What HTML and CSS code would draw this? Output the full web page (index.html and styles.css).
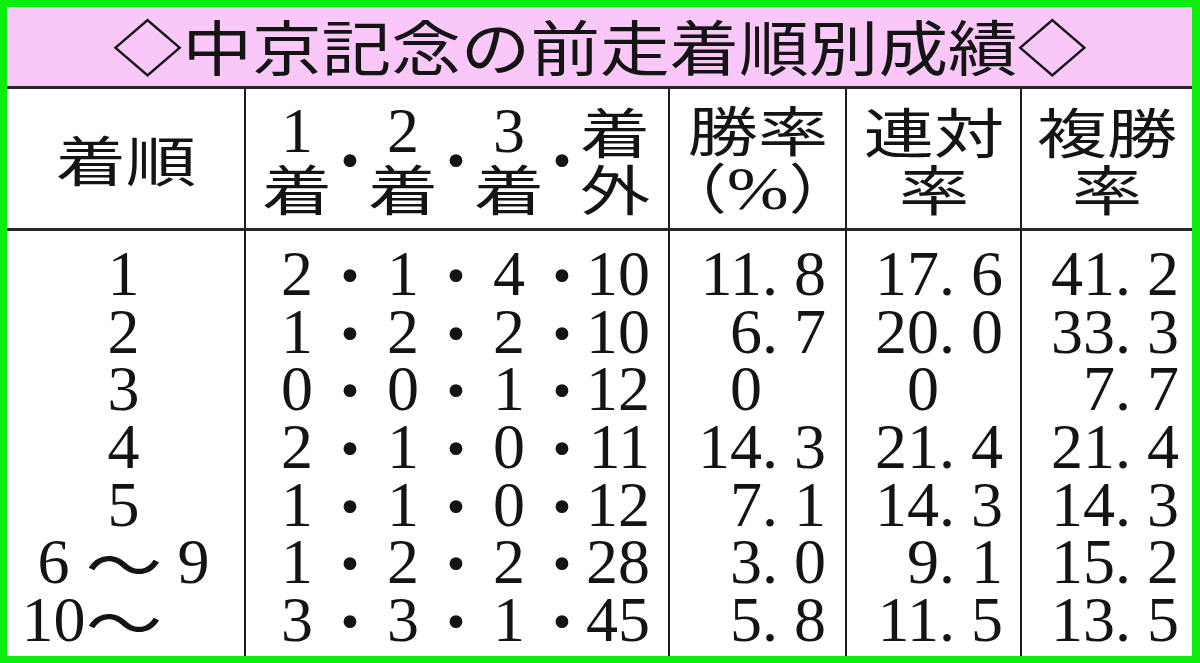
FILE: index.html
```html
<!DOCTYPE html>
<html lang="ja">
<head>
<meta charset="utf-8">
<title>中京記念の前走着順別成績</title>
<link rel="stylesheet" href="styles.css">
</head>
<body>
<div class="frame">
  <div class="title"><span class="title-text">◇中京記念の前走着順別成績◇</span></div>
  <div class="table">
    <div class="th c1"><span class="jp">着順</span></div>
    <div class="th c2">
      <div class="grp"><span class="num">1</span><span class="jp">着</span></div>
      <span class="dot">･</span>
      <div class="grp"><span class="num">2</span><span class="jp">着</span></div>
      <span class="dot">･</span>
      <div class="grp"><span class="num">3</span><span class="jp">着</span></div>
      <span class="dot">･</span>
      <div class="grp"><span class="jp">着</span><span class="jp">外</span></div>
    </div>
    <div class="th c3"><span class="jp">勝率</span><span class="paren">（<span class="pct">%</span>）</span></div>
    <div class="th c4"><span class="jp">連対</span><span class="jp">率</span></div>
    <div class="th c5"><span class="jp">複勝</span><span class="jp">率</span></div>

    <div class="td c1">
      <div class="rank">1</div>
      <div class="rank">2</div>
      <div class="rank">3</div>
      <div class="rank">4</div>
      <div class="rank">5</div>
      <div class="rank range"><span class="slot">6</span><span class="wave">〜</span><span class="slot">9</span></div>
      <div class="rank range"><span class="slot">10</span><span class="wave">〜</span><span class="slot"></span></div>
    </div>
    <div class="td c2">
      <div class="rec"><span>2</span><span class="dot">･</span><span>1</span><span class="dot">･</span><span>4</span><span class="dot">･</span><span class="last">10</span></div>
      <div class="rec"><span>1</span><span class="dot">･</span><span>2</span><span class="dot">･</span><span>2</span><span class="dot">･</span><span class="last">10</span></div>
      <div class="rec"><span>0</span><span class="dot">･</span><span>0</span><span class="dot">･</span><span>1</span><span class="dot">･</span><span class="last">12</span></div>
      <div class="rec"><span>2</span><span class="dot">･</span><span>1</span><span class="dot">･</span><span>0</span><span class="dot">･</span><span class="last">11</span></div>
      <div class="rec"><span>1</span><span class="dot">･</span><span>1</span><span class="dot">･</span><span>0</span><span class="dot">･</span><span class="last">12</span></div>
      <div class="rec"><span>1</span><span class="dot">･</span><span>2</span><span class="dot">･</span><span>2</span><span class="dot">･</span><span class="last">28</span></div>
      <div class="rec"><span>3</span><span class="dot">･</span><span>3</span><span class="dot">･</span><span>1</span><span class="dot">･</span><span class="last">45</span></div>
    </div>
    <div class="td c3 rate">
      <div>11. 8</div>
      <div>6. 7</div>
      <div class="int">0</div>
      <div>14. 3</div>
      <div>7. 1</div>
      <div>3. 0</div>
      <div>5. 8</div>
    </div>
    <div class="td c4 rate">
      <div>17. 6</div>
      <div>20. 0</div>
      <div class="int">0</div>
      <div>21. 4</div>
      <div>14. 3</div>
      <div>9. 1</div>
      <div>11. 5</div>
    </div>
    <div class="td c5 rate">
      <div>41. 2</div>
      <div>33. 3</div>
      <div>7. 7</div>
      <div>21. 4</div>
      <div>14. 3</div>
      <div>15. 2</div>
      <div>13. 5</div>
    </div>
  </div>
</div>
</body>
</html>
```

FILE: styles.css
```css
html, body {
  margin: 0;
  padding: 0;
  background: #ffffff;
}

.frame {
  box-sizing: border-box;
  width: 1200px;
  height: 663px;
  border-style: solid;
  border-color: #0cee0c;
  border-width: 7px 8px 7px 7px;
  display: flex;
  flex-direction: column;
  background: #ffffff;
  color: #141414;
}

.title {
  flex: none;
  background: #f9c8f8;
  border-bottom: 3px solid #262626;
  display: flex;
  align-items: center;
  justify-content: center;
  padding-bottom: 4px;
  height: 75px;
}

.title-text {
  display: inline-block;
  font-family: "Noto Sans CJK JP", sans-serif;
  font-size: 60px;
  line-height: 1;
  transform: scaleX(1.16);
}

.table {
  flex: 1;
  display: grid;
  grid-template-columns: 239px 424px 177px 175px 170px;
  grid-template-rows: 142px 1fr;
}

.th, .td {
  box-sizing: border-box;
  border-right: 2px solid #1e1e1e;
}

.c5 {
  border-right: none;
}

.th {
  border-bottom: 3px solid #262626;
  display: flex;
  flex-direction: column;
  align-items: center;
  justify-content: center;
}

.jp {
  display: inline-block;
  font-family: "Noto Sans CJK JP", sans-serif;
  font-size: 54px;
  line-height: 57px;
  transform: scaleX(1.3);
}

.num {
  font-family: "Liberation Serif", serif;
  font-size: 64px;
  line-height: 57px;
}

.th.c2 {
  display: grid;
  grid-template-columns: 70px 36px 70px 36px 70px 36px 70px;
  justify-content: end;
  align-items: center;
  padding-right: 18px;
}

.grp {
  display: flex;
  flex-direction: column;
  align-items: center;
}

.dot {
  font-family: "Noto Sans CJK JP", sans-serif;
  font-weight: 700;
  font-size: 58px;
  line-height: 57px;
  text-align: center;
  -webkit-text-stroke: 1.5px #141414;
}

.paren {
  display: inline-block;
  font-family: "Noto Sans CJK JP", sans-serif;
  font-size: 54px;
  line-height: 57px;
  transform: scaleX(1.2);
}

.pct {
  font-family: "Liberation Serif", serif;
  font-size: 62px;
}

.td {
  padding-top: 14px;
  font-family: "Liberation Serif", serif;
  font-size: 64px;
  line-height: 57.7px;
}

.td.c1 {
  padding-right: 4px;
}

.rank {
  text-align: center;
  height: 57.7px;
}

.range {
  display: grid;
  grid-template-columns: 70px 70px 70px;
  justify-content: center;
}

.slot {
  text-align: center;
}

.wave {
  display: inline-block;
  font-family: "Noto Sans CJK JP", sans-serif;
  font-size: 64px;
  text-align: center;
  transform: scaleX(1.2);
}

.td.c2 {
  padding-right: 18px;
}

.rec {
  display: grid;
  grid-template-columns: 70px 36px 70px 36px 70px 36px 70px;
  justify-content: end;
  height: 57.7px;
}

.rec span {
  text-align: center;
}

.rec .dot {
  line-height: 57.7px;
}

.rec .last {
  text-align: right;
}

.rate {
  text-align: right;
}

.rate div {
  height: 57.7px;
  white-space: pre;
}

.rate .int {
  padding-right: 1em;
}

.td.c3 { padding-right: 19px; }
.td.c4 { padding-right: 17px; }
.td.c5 { padding-right: 13px; }
```
